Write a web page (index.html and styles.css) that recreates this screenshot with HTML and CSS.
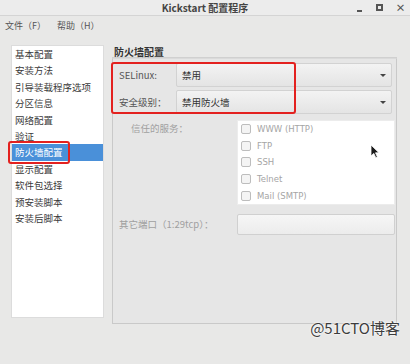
FILE: index.html
```html
<!DOCTYPE html>
<html lang="zh-CN">
<head>
  <meta charset="UTF-8">
  <title>Kickstart 配置程序</title>
  <link rel="stylesheet" href="styles.css">
</head>
<body>
  <div class="window">
    <div class="titlebar">
      <span class="title">Kickstart 配置程序</span>
      <div class="controls">
        <span class="ctl min"></span>
        <span class="ctl max"></span>
        <span class="ctl close">×</span>
      </div>
    </div>
    <div class="menubar">
      <span class="menu">文件（F）</span>
      <span class="menu">帮助（H）</span>
    </div>

    <div class="main">
      <ul class="sidebar">
        <li>基本配置</li>
        <li>安装方法</li>
        <li>引导装载程序选项</li>
        <li>分区信息</li>
        <li>网络配置</li>
        <li>验证</li>
        <li class="active">防火墙配置</li>
        <li>显示配置</li>
        <li>软件包选择</li>
        <li>预安装脚本</li>
        <li>安装后脚本</li>
      </ul>

      <div class="panel">
        <div class="panel-title">防火墙配置</div>
        <div class="frame">
          <div class="form">
            <label class="label">SELinux:</label>
            <div class="combo"><span>禁用</span><span class="arrow"></span></div>
            <label class="label">安全级别：</label>
            <div class="combo"><span>禁用防火墙</span><span class="arrow"></span></div>
          </div>

          <div class="services">
            <span class="label dim trusted">信任的服务：</span>
            <ul class="checklist">
              <li><span class="check"></span>WWW (HTTP)</li>
              <li><span class="check"></span>FTP</li>
              <li><span class="check"></span>SSH</li>
              <li><span class="check"></span>Telnet</li>
              <li><span class="check"></span>Mail (SMTP)</li>
            </ul>
            <span class="label dim">其它端口（1:29tcp）：</span>
            <div class="entry"></div>
          </div>
        </div>
      </div>
    </div>
  </div>

  <!-- annotations drawn over the screenshot -->
  <div class="mark mark-list"></div>
  <div class="mark mark-form"></div>
  <svg class="cursor" width="10" height="15" viewBox="0 0 10 15">
    <path d="M1 1 L1 12 L3.8 9.4 L5.8 13.8 L7.4 13 L5.5 8.8 L9 8.8 Z" fill="#1a1a1a" stroke="#fff" stroke-width="0.8"/>
  </svg>
  <div class="watermark">@51CTO博客</div>
</body>
</html>
```

FILE: styles.css
```css
body {
  margin: 0;
  padding: 0;
  background: #e8e8e7;
  font-family: "Noto Sans CJK SC", "Noto Sans", sans-serif;
  color: #333;
  overflow: hidden;
}
.window {
  position: relative;
  width: 410px;
  height: 364px;
}
/* Title bar */
.titlebar {
  height: 15px;
  border-bottom: 1px solid #d4d4d4;
  background: #ececec;
  display: flex;
  justify-content: center;
  align-items: center;
  position: relative;
}
.title {
  font-size: 10px;
  font-weight: bold;
  color: #444;
  line-height: 15px;
}
.controls {
  position: absolute;
  right: 6px;
  top: 0;
  height: 15px;
  display: flex;
  align-items: center;
  gap: 14px;
}
.ctl {
  width: 7px;
  height: 7px;
  display: flex;
  justify-content: center;
  align-items: center;
  color: #555;
  font-size: 10px;
  font-weight: bold;
}
.ctl.min { border-bottom: 2px solid #555; height: 4px; width: 5px; margin-top: 2px; }
.ctl.max { border: 2px solid #555; width: 3px; height: 3px; }
/* Menu bar */
.menubar {
  height: 19px;
  display: flex;
  align-items: center;
  padding-left: 5px;
  gap: 11px;
  font-size: 9px;
  color: #555;
}
/* Main area */
.main {
  display: flex;
  padding: 11px 0 0 12px;
  gap: 9px;
}
.sidebar {
  list-style: none;
  margin: 0;
  padding: 0;
  width: 91px;
  height: 271px;
  background: #fff;
  box-shadow: 0 0 0 1px #dcdcdc;
  font-size: 9.5px;
}
.sidebar li {
  height: 16.4px;
  line-height: 16.4px;
  padding-left: 3px;
  color: #3a3a3a;
  white-space: nowrap;
}
.sidebar li.active {
  background: #4a90d9;
  color: #fff;
}
.panel {
  width: 285px;
  display: flex;
  flex-direction: column;
}
.panel-title {
  height: 11px;
  line-height: 11px;
  font-size: 10px;
  font-weight: bold;
  color: #333;
  padding-left: 2px;
  border-bottom: 1px solid #d0d0d0;
}
.frame {
  height: 260px;
  border: 1px solid #c9c9c9;
  border-top-color: #dadada;
  background: #e6e6e6;
  padding: 4px 4px 0 0;
}
.form {
  display: grid;
  grid-template-columns: 63px 1fr;
  row-gap: 3px;
  align-items: center;
}
.label {
  font-size: 9.5px;
  padding-left: 6px;
  color: #555;
  white-space: nowrap;
}
.combo {
  height: 22px;
  border: 1px solid #d2d2d2;
  border-radius: 2px;
  background: linear-gradient(#f3f3f3, #e4e4e4);
  display: flex;
  justify-content: space-between;
  align-items: center;
  padding: 0 5px;
  font-size: 9.5px;
  color: #333;
}
.arrow {
  width: 0;
  height: 0;
  border-left: 3px solid transparent;
  border-right: 3px solid transparent;
  border-top: 3px solid #444;
}
.services {
  margin-top: 6px;
  margin-right: -3px;
  display: grid;
  grid-template-columns: 124px 1fr;
  row-gap: 9px;
  align-items: center;
}
.dim { color: #a0a0a0; }
.trusted {
  align-self: start;
  padding-left: 18px;
  margin-top: 1px;
}
.checklist {
  list-style: none;
  margin: 0;
  padding: 0 0 0 3px;
  background: #fff;
  border: 1px solid #ececec;
  font-family: "DejaVu Sans", sans-serif;
  font-size: 8.5px;
  color: #a5a5a5;
}
.checklist li {
  height: 16.6px;
  display: flex;
  align-items: center;
  gap: 6px;
}
.check {
  width: 8px;
  height: 8px;
  border: 1px solid #bdbdbd;
  border-radius: 2px;
  background: #f4f4f4;
}
.entry {
  height: 19px;
  border: 1px solid #d0d0d0;
  border-radius: 2px;
  background: linear-gradient(#f6f6f6, #ececec);
}
/* Overlays: red annotation boxes, pointer, watermark */
.mark {
  position: absolute;
  border: 2px solid #e3211f;
  border-radius: 3px;
}
.mark-list {
  left: 8px;
  top: 141px;
  width: 58px;
  height: 19px;
}
.mark-form {
  left: 111px;
  top: 62px;
  width: 181px;
  height: 48px;
}
.cursor {
  position: absolute;
  left: 370px;
  top: 144px;
}
.watermark {
  position: absolute;
  right: 10px;
  top: 317px;
  font-size: 15px;
  color: #3c3c3c;
  text-shadow: 0 0 2px #fff, 0 0 2px #fff;
}
```
